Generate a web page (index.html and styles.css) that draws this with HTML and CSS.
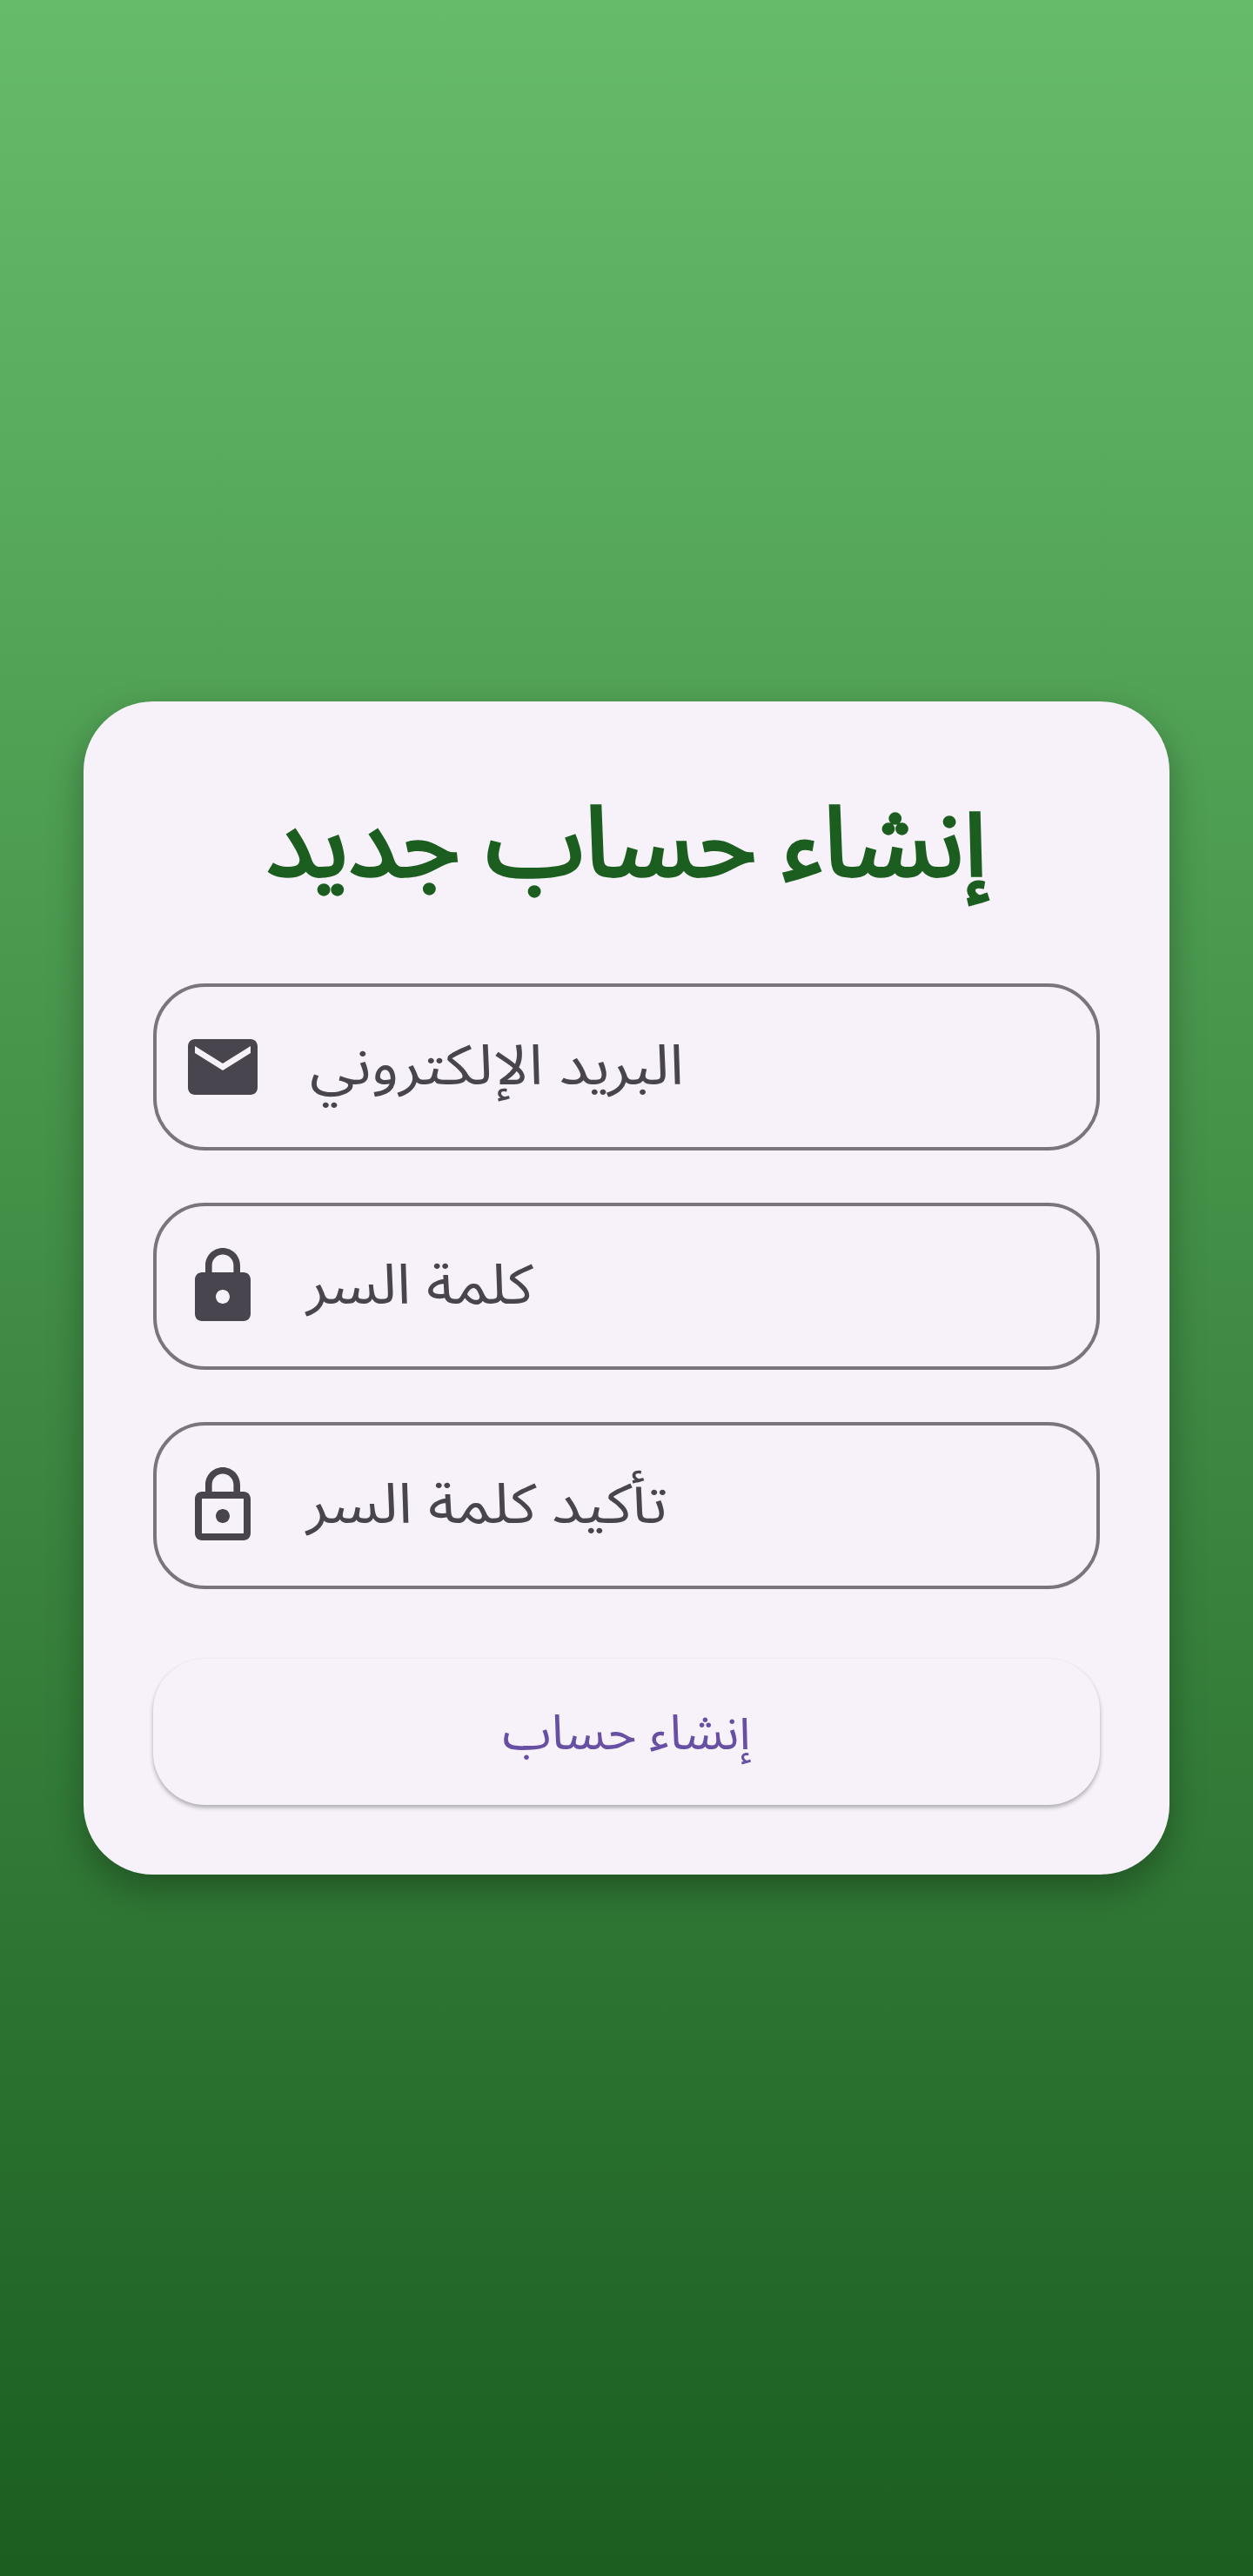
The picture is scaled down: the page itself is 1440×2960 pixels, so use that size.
FILE: index.html
```
<!DOCTYPE html>
<html lang="ar">
<head>
<meta charset="utf-8">
<title>إنشاء حساب جديد</title>
<link rel="stylesheet" href="styles.css">
</head>
<body>
<main class="card">
<h1 class="title"><span class="title-text" dir="rtl">إنشاء حساب جديد</span></h1>
<div class="field"><svg class="icon" viewBox="0 0 24 24"><path d="M20 4H4c-1.100 0-1.990.9-1.990 2L2 18c0 1.100.9 2 2 2h16c1.100 0 2-.9 2-2V6c0-1.100-.9-2-2-2zm0 4l-8 5-8-5V6l8 5 8-5v2z"/></svg><span class="label label-email" dir="rtl">البريد الإلكتروني</span></div>
<div class="field"><svg class="icon" viewBox="0 0 24 24"><path d="M18 8h-1V6c0-2.760-2.240-5-5-5S7 3.240 7 6v2H6c-1.100 0-2 .9-2 2v10c0 1.100.9 2 2 2h12c1.100 0 2-.9 2-2V10c0-1.100-.9-2-2-2zm-6 9c-1.100 0-2-.9-2-2s.9-2 2-2 2 .9 2 2-.9 2-2 2zm3.100-9H8.900V6c0-1.710 1.390-3.100 3.100-3.100 1.710 0 3.100 1.390 3.100 3.100v2z"/></svg><span class="label label-password" dir="rtl">كلمة السر</span></div>
<div class="field"><svg class="icon" viewBox="0 0 24 24"><path d="M12 17c1.100 0 2-.9 2-2s-.9-2-2-2-2 .9-2 2 .9 2 2 2zm6-9h-1V6c0-2.760-2.240-5-5-5S7 3.240 7 6v2H6c-1.100 0-2 .9-2 2v10c0 1.100.9 2 2 2h12c1.100 0 2-.9 2-2V10c0-1.100-.9-2-2-2zM8.900 6c0-1.710 1.390-3.100 3.100-3.100s3.100 1.390 3.100 3.100v2H8.900V6zM18 20H6V10h12v10z"/></svg><span class="label label-confirm" dir="rtl">تأكيد كلمة السر</span></div>
<button class="submit" type="button"><span class="submit-text" dir="rtl">إنشاء حساب</span></button>
</main>
</body>
</html>
```
FILE: styles.css
```
* { box-sizing: border-box; }
body {
  margin: 0;
  height: 2960px;
  display: flex;
  align-items: center;
  justify-content: center;
  font-family: "Noto Sans Arabic", "Noto Sans", "DejaVu Sans", sans-serif;
  background: linear-gradient(#66bb6a, #1b5e20);
}
.card {
  width: 1248px;
  height: 1348px;
  padding: 80px;
  border-radius: 80px;
  background: #f7f2fa;
  box-shadow: 0 16px 40px rgba(0,0,0,.3);
}
.title {
  display: flex;
  align-items: center;
  justify-content: center;
  height: 168px;
  margin: 0 0 76px;
  font-size: 112px;
  font-weight: 400;
  -webkit-text-stroke: 3.5px #1b5e20;
  color: #1b5e20;
}
.title-text { transform: scaleX(1.02); }
.field {
  display: flex;
  align-items: center;
  height: 192px;
  margin-bottom: 60px;
  padding-left: 28px;
  border: 4px solid #79747e;
  border-radius: 60px;
  color: #49454f;
}
.icon { width: 96px; height: 96px; margin-right: 48px; fill: currentColor; }
.label {
  padding-bottom: 2px;
  font-size: 64px;
  transform-origin: left center;
}
.label-email { margin-left: 4px; transform: scaleX(1.1); }
.label-password { transform: scaleX(1.076); }
.label-confirm { transform: scaleX(1.091); }
.submit {
  display: block;
  width: 100%;
  height: 168px;
  margin-top: 80px;
  padding: 4px 0 0;
  border: 0;
  border-radius: 60px;
  background: #f7f2fa;
  box-shadow: 0 3px 5px rgba(0,0,0,.3);
  color: #6750a4;
  font: 400 56px "Noto Sans Arabic", "Noto Sans", "DejaVu Sans", sans-serif;
}
.submit-text { display: inline-block; transform: scaleX(1.01); }
```
